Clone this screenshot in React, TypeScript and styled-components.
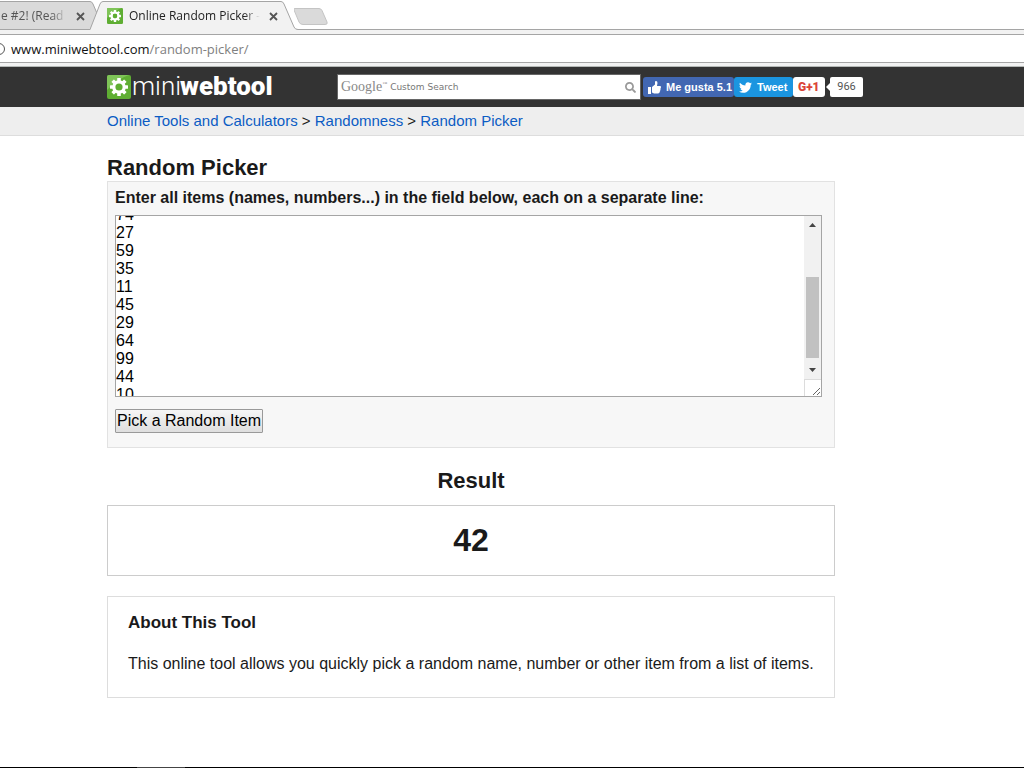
import React, { useEffect, useRef } from "react";
import styled, { createGlobalStyle } from "styled-components";
import { FaTwitter, FaSearch } from "react-icons/fa";

const Global = createGlobalStyle`
  * { box-sizing: border-box; }
  html, body, #root { height: 100%; }
  body { margin: 0; background: #fff; color: #1a1a1a; font: 16px/18px "Liberation Sans", Arial, sans-serif; }
`;

const Page = styled.div`
  min-height: 100%;
  display: flex;
  flex-direction: column;
  overflow: hidden;
`;

const TabStrip = styled.div`
  display: flex;
  height: 30px;
  border-bottom: 1px solid #a5a5a5;
  font: 12px/16px "Open Sans", "Noto Sans", sans-serif;
`;

const Tab = styled.div<{ $active?: boolean }>`
  position: relative;
  display: flex;
  align-items: center;
  flex: none;
  gap: 6px;
  height: 30px;
  width: ${(p) => (p.$active ? 195 : 99)}px;
  padding: ${(p) => (p.$active ? "2px 0 0 8px" : "2px 0 0 1px")};
  z-index: ${(p) => (p.$active ? 1 : 0)};
  color: ${(p) => (p.$active ? "#222" : "#555")};
`;

const Shape = styled.svg<{ $left: number }>`
  position: absolute;
  top: 0;
  left: ${(p) => p.$left}px;
  z-index: -1;
`;

const TabTitle = styled.span<{ $width: number }>`
  width: ${(p) => p.$width}px;
  white-space: nowrap;
  mask-image: linear-gradient(to left, transparent, #000 16px);
`;

const CloseButton = styled.button`
  display: flex;
  border: 0;
  padding: 3px;
  background: none;
`;

const AddressBar = styled.div`
  height: 37px;
  padding-top: 4px;
  background: #f2f2f2;
  border-bottom: 1px solid #b4b8b6;
`;

const AddressField = styled.div`
  display: flex;
  align-items: center;
  height: 29px;
  border: solid #a5a5a5;
  border-width: 1px 0;
  background: #fff;
  overflow: hidden;
  gap: 6px;
`;

const InfoMark = styled.span`
  flex: none;
  width: 12px;
  height: 12px;
  margin-left: -7px;
  border: 1px solid #555;
  border-radius: 50%;
`;

const Url = styled.div`
  font: 13px/18px "Open Sans", "Noto Sans", sans-serif;
  color: #111;
  span { color: #808080; }
`;

const Header = styled.header`
  display: flex;
  align-items: center;
  height: 40px;
  padding-left: 107px;
  background: #333;
`;

const Logo = styled.a`
  display: flex;
  align-items: center;
  gap: 1px;
  width: 230px;
  flex: none;
  color: #fff;
  text-decoration: none;
`;

const SearchForm = styled.form`
  display: flex;
  align-items: center;
  flex: none;
  width: 304px;
  height: 26px;
  margin-right: 2px;
  padding: 0 4px 0 3px;
  border: 1px solid #666;
  background: #fff;
`;

const GoogleMark = styled.span`
  flex: none;
  font: 14px/20px "Liberation Serif", serif;
  color: #888;
  sup { font-size: 5px; line-height: 1px; }
`;

const SearchInput = styled.input`
  flex: 1;
  min-width: 0;
  border: 0;
  padding: 0 3px;
  outline: 0;
  background: none;
  font: 9px/14px "DejaVu Sans", sans-serif;
  &::placeholder { color: #777; opacity: 1; }
`;

const SearchButton = styled.button`
  display: flex;
  border: 0;
  padding: 0;
  background: none;
  color: #999;
`;

const Social = styled.button<{ $bg: string; $width: number }>`
  display: flex;
  align-items: center;
  flex: none;
  gap: 5px;
  width: ${(p) => p.$width}px;
  height: 20px;
  padding: 0 0 0 5px;
  border: 0;
  border-radius: 3px;
  background: ${(p) => p.$bg};
  color: #fff;
  font: bold 11px/14px "Liberation Sans", Arial, sans-serif;
  white-space: nowrap;
  svg { flex: none; }
`;

const PlusOne = styled(Social)`
  color: #db4437;
  font: 900 12px/14px Roboto, sans-serif;
`;

const Count = styled.span`
  position: relative;
  width: 33px;
  height: 20px;
  margin-left: 5px;
  border-radius: 2px;
  background: #fff;
  color: #555;
  font: 11px/20px Roboto, sans-serif;
  text-align: center;
  &::before {
    content: "";
    position: absolute;
    left: -4px;
    top: 6px;
    border: solid transparent;
    border-width: 4px 4px 4px 0;
    border-right-color: #fff;
  }
`;

const Breadcrumb = styled.nav`
  height: 29px;
  padding: 5px 0 0 107px;
  border-bottom: 1px solid #ddd;
  background: #eee;
  font-size: 15px;
  a { color: #0b5cc4; text-decoration: none; }
`;

const Main = styled.main`
  width: 100%;
  max-width: 835px;
  padding: 19px 0 0 107px;
`;

const Title = styled.h1`
  margin: 0;
  font-size: 22px;
  line-height: 26px;
`;

const Form = styled.form`
  padding: 7px 12px 14px 7px;
  border: 1px solid #e2e2e2;
  background: #f7f7f7;
`;

const Label = styled.label`
  display: block;
  margin-bottom: 8px;
  font-weight: bold;
`;

const ItemsBox = styled.div`
  display: flex;
  height: 182px;
  margin-bottom: 12px;
  border: 1px solid #a5a5a5;
  background: #fff;
`;

const Items = styled.textarea`
  flex: 1;
  min-width: 0;
  padding: 2px 0;
  border: 0;
  outline: 0;
  resize: none;
  overflow: hidden;
  background: none;
  color: #000;
  font: 16px/18px "Liberation Sans", Arial, sans-serif;
`;

const ScrollBar = styled.div`
  display: flex;
  flex-direction: column;
  align-items: center;
  width: 17px;
  background: #f1f1f1;
`;

const Arrow = styled.svg`
  width: 17px;
  height: 17px;
  fill: #444;
`;

const Track = styled.div`
  display: flex;
  align-items: flex-end;
  flex: 1;
  padding-bottom: 4px;
`;

const Thumb = styled.div`
  width: 13px;
  height: 81px;
  background: #c1c1c1;
`;

const Grip = styled.svg`
  width: 17px;
  height: 17px;
  border: solid #dcdcdc;
  border-width: 1px 0 0 1px;
  background: #fff;
  stroke: #666;
`;

const PickButton = styled.button`
  display: block;
  height: 24px;
  padding: 0 1px;
  border: 1px solid #999;
  border-radius: 1px;
  background: linear-gradient(#f6f6f6, #dedede);
  color: #000;
  font: 16px/20px "Liberation Sans", Arial, sans-serif;
`;

const ResultTitle = styled.h2`
  margin: 20px 0 11px;
  font-size: 22px;
  line-height: 26px;
  text-align: center;
`;

const Result = styled.output`
  display: block;
  padding: 16px 0 17px;
  border: 1px solid #ccc;
  font-size: 32px;
  line-height: 36px;
  font-weight: bold;
  text-align: center;
`;

const About = styled.section`
  margin-top: 20px;
  padding: 17px 20px 24px;
  border: 1px solid #ddd;
  h3 { margin: 0 0 23px; font-size: 17px; line-height: 18px; }
  p { margin: 0; }
`;

const Footer = styled.footer`
  height: 1px;
  margin-top: auto;
  background: linear-gradient(#444, #444) 137px 0 / 48px 1px no-repeat #000;
`;

const teeth = [0, 45, 90, 135, 180, 225, 270, 315];

function Gear({ size }: { size: number }) {
  return (
    <svg width={size} height={size} viewBox="0 0 24 24" aria-hidden="true">
      <rect width="24" height="24" rx="2" fill="#5fae33" />
      <path d="M2 0H22Q12 3 0 15V2Q0 0 2 0Z" fill="#7fc458" />
      <g fill="#fff">
        {teeth.map((a) => (
          <rect key={a} x="10.2" y="3" width="3.6" height="5" rx=".5" transform={`rotate(${a} 12 12)`} />
        ))}
      </g>
      <circle cx="12" cy="12" r="5.2" fill="none" stroke="#fff" strokeWidth="3.2" />
    </svg>
  );
}

function Close({ label }: { label: string }) {
  return (
    <CloseButton aria-label={label}>
      <svg width="9" height="9" viewBox="0 0 9 9" stroke="#555" strokeWidth="1.8">
        <path d="M1 1l7 7M8 1L1 8" />
      </svg>
    </CloseButton>
  );
}

const numbers = [74, 27, 59, 35, 11, 45, 29, 64, 99, 44, 10];

export default function App() {
  const items = useRef<HTMLTextAreaElement>(null);
  useEffect(() => {
    if (items.current) items.current.scrollTop = 12;
  }, []);

  return (
    <Page>
      <Global />
      <TabStrip>
        <Tab>
          <Shape $left={-10} width="110" height="30">
            <path d="M0 4.500H100Q102 4.500 103 7L109 18L102 29.500H0" fill="#dadada" stroke="none" />
            <path d="M0 1.500H100Q102 1.500 103 4L109 18L102 29.500H0" fill="#dadada" stroke="#a5a5a5" />
          </Shape>
          <TabTitle $width={66}>e #2! (Read d</TabTitle>
          <Close label="Close first tab" />
        </Tab>
        <Tab $active>
          <Shape $left={-9} width="210" height="30">
            <path d="M0 30L10 4Q11 1.500 13 1.500H191Q193 1.500 194 4L204 27Q205 29.500 208 29.500V30Z" fill="#f2f2f2" />
            <path d="M0 29.500L10 4Q11 1.500 13 1.500H191Q193 1.500 194 4L204 27Q205 29.500 208 29.500" fill="none" stroke="#a5a5a5" />
          </Shape>
          <Gear size={16} />
          <TabTitle $width={131}>Online Random Picker -</TabTitle>
          <Close label="Close second tab" />
        </Tab>
        <svg width="36" height="30" aria-hidden="true">
          <path d="M1 8.500H25Q27 8.500 28 10.500L33 22Q34 24.500 31 24.500H9Q6 24.500 5 22L0 10Q-1 8.500 1 8.500Z" fill="#dadada" stroke="#c4c4c4" />
        </svg>
      </TabStrip>
      <AddressBar>
        <AddressField>
          <InfoMark />
          <Url>www.miniwebtool.com<span>/random-picker/</span></Url>
        </AddressField>
      </AddressBar>
      <Header>
        <Logo href="#" aria-label="miniwebtool">
          <Gear size={24} />
          <svg width="145" height="30" fill="#fff" fontFamily="Roboto, sans-serif">
            <text x="0" y="23" fontWeight="300" fontSize="26">mini</text>
            <text x="48" y="23" fontWeight="900" fontSize="26">webtool</text>
          </svg>
        </Logo>
        <SearchForm>
          <GoogleMark>Google<sup>™</sup></GoogleMark>
          <SearchInput aria-label="Search" placeholder="Custom Search" />
          <SearchButton type="button" aria-label="Run search"><FaSearch size={11} /></SearchButton>
        </SearchForm>
        <Social $bg="#4267b2" $width={91}>
          <svg width="13" height="13" viewBox="0 0 13 13" fill="#fff" aria-hidden="true">
            <path d="M0 6H3V13H0ZM4 6L7 3.500V1Q7 0 8 0Q9.500 0 9.500 2L9 5H12Q13 5 13 6Q13 7 12.500 7.300Q13 8.500 12.200 9Q12.500 10.200 11.700 10.800Q11.800 12.500 10 12.500H6L4 11.500Z" />
          </svg>
          Me gusta 5.1
        </Social>
        <Social $bg="#1b95e0" $width={59}><FaTwitter size={13} /> Tweet</Social>
        <PlusOne $bg="#fff" $width={32}>G+1</PlusOne>
        <Count>966</Count>
      </Header>
      <Breadcrumb>
        <a href="#">Online Tools and Calculators</a> &gt; <a href="#">Randomness</a> &gt; <a href="#">Random Picker</a>
      </Breadcrumb>
      <Main>
        <Title>Random Picker</Title>
        <Form>
          <Label htmlFor="items">Enter all items (names, numbers...) in the field below, each on a separate line:</Label>
          <ItemsBox>
            <Items id="items" ref={items} defaultValue={numbers.join("\n")} />
            <ScrollBar aria-hidden="true">
              <Arrow viewBox="0 0 17 17"><path d="M5 11L8.500 7L12 11Z" /></Arrow>
              <Track><Thumb /></Track>
              <Arrow viewBox="0 0 17 17"><path d="M5 6L8.500 10L12 6Z" /></Arrow>
              <Grip viewBox="0 0 16 16"><path d="M8 15L15 8M12 15L15 12" /></Grip>
            </ScrollBar>
          </ItemsBox>
          <PickButton type="button">Pick a Random Item</PickButton>
        </Form>
        <ResultTitle>Result</ResultTitle>
        <Result>42</Result>
        <About>
          <h3>About This Tool</h3>
          <p>This online tool allows you quickly pick a random name, number or other item from a list of items.</p>
        </About>
      </Main>
      <Footer />
    </Page>
  );
}
